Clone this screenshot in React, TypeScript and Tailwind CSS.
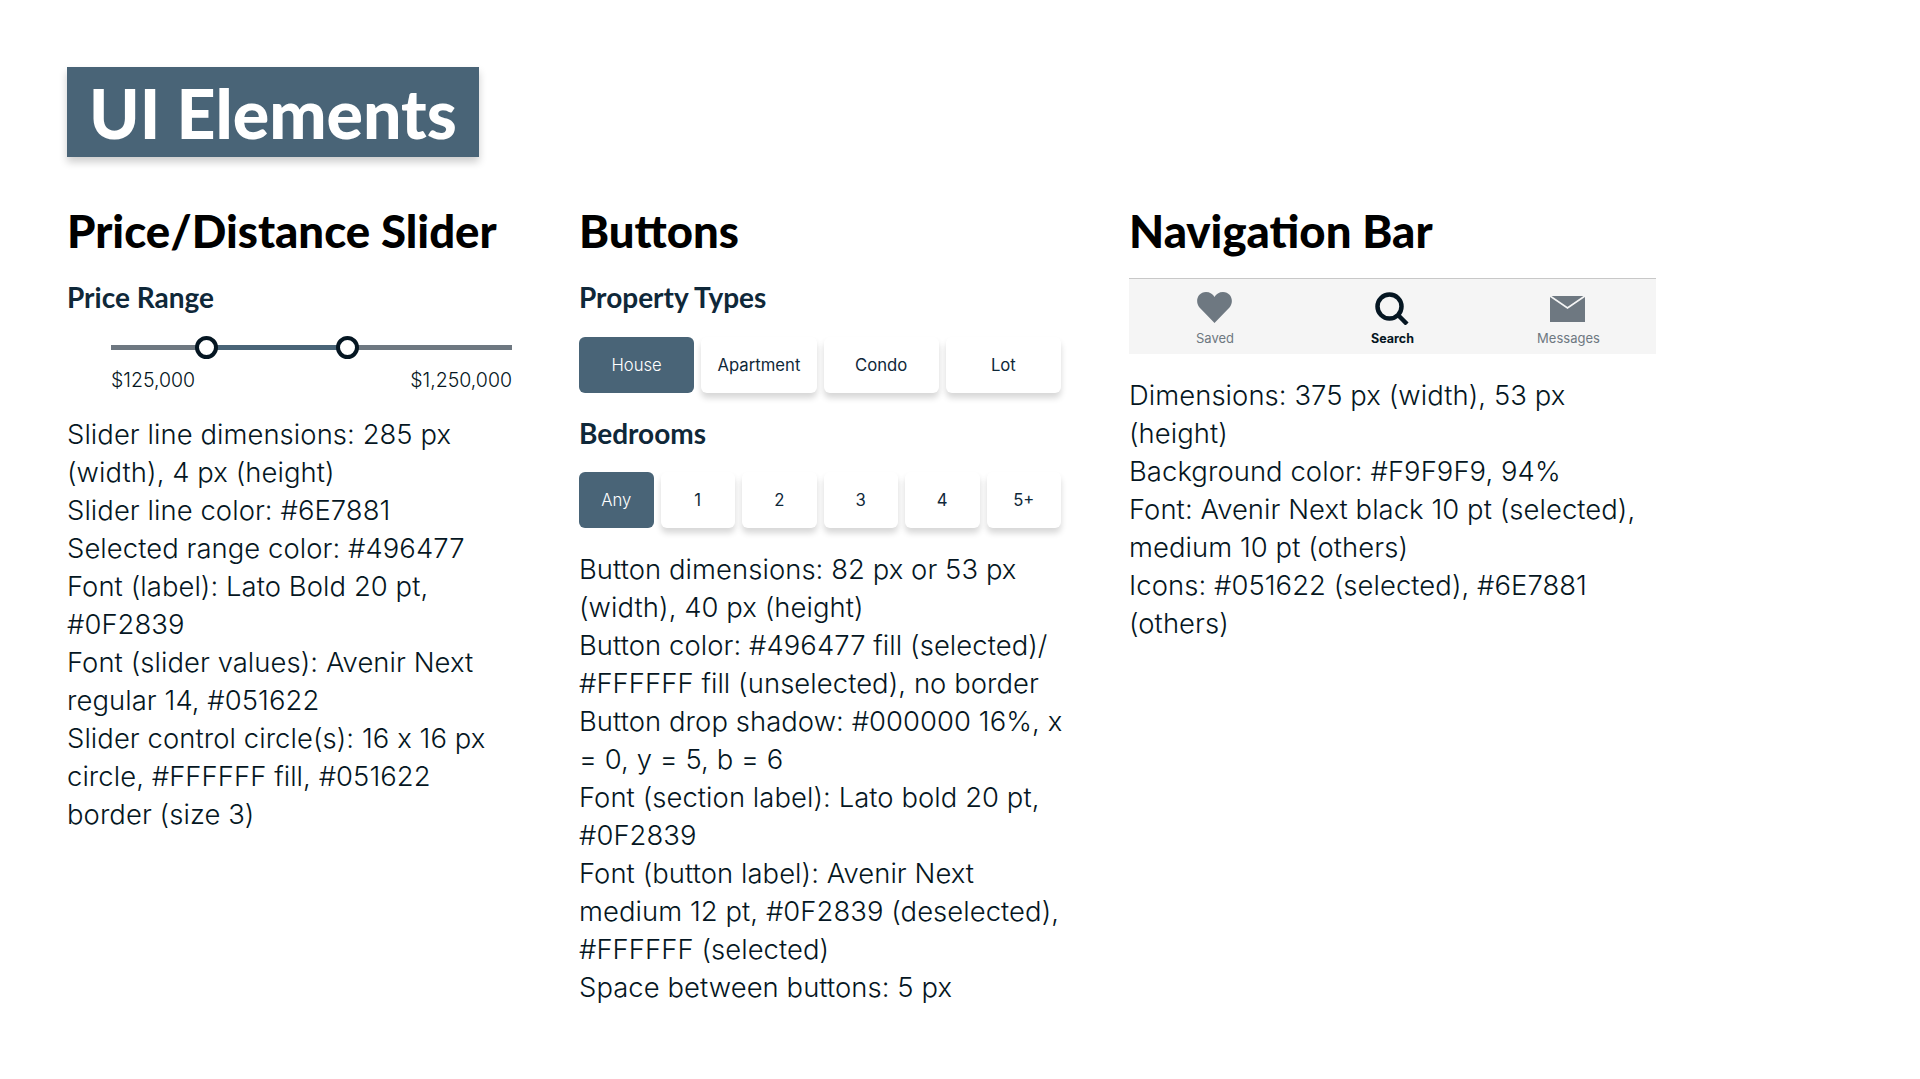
const body = "font-['Inter',sans-serif] font-light text-[27.4px] tracking-[0.08px] leading-[38px] text-[#051622] [font-feature-settings:'calt'_0]";
const lato = "font-['Lato',sans-serif]";
const avenir = "font-['Inter',sans-serif]";

function Heading({ children }: { children: string }) {
  return <h2 className={`${lato} text-[45.5px] leading-[55px] pb-[1px] font-black text-black whitespace-nowrap`}>{children}</h2>;
}
function Sub({ children }: { children: string }) {
  return <h3 className={`${lato} text-[28px] leading-[36px] font-bold text-[#0f2839]`}>{children}</h3>;
}
function Btn({ label, selected, wide }: { label: string; selected?: boolean; wide?: boolean }) {
  return (
    <div
      className={`${wide ? "w-[115.25px]" : "w-[74.5px]"} h-[56px] pt-[1px] rounded-[6px] flex items-center justify-center text-[16.7px] ${avenir} ${
        selected ? "bg-[#496477] text-white font-light" : "bg-white text-[#0f2839] shadow-[0_5px_6px_rgba(0,0,0,0.16)]"
      }`}
    >
      {label}
    </div>
  );
}

export default function App() {
  return (
    <div className="w-[1920px] h-[1079px] bg-white overflow-hidden pl-[67px] pt-[67px]">
      <div className={`${lato} w-[412px] h-[90px] bg-[#496477] text-white font-black text-[68px] leading-[92px] pl-[22px] whitespace-nowrap shadow-[0_5px_8px_rgba(0,0,0,0.2)]`}>
        UI Elements
      </div>
      <div className="flex mt-[46px]">
        <section className="w-[512px]">
          <Heading>Price/Distance Slider</Heading>
          <div className="mt-[20px]"><Sub>Price Range</Sub></div>
          <div className="ml-[44px] w-[401px] mt-[30px]">
            <div className="relative h-[5px] bg-[#6e7881]">
              <div className="absolute left-[96px] w-[140px] h-[5px] bg-[#496477]" />
              <div className="absolute left-[84px] top-[-9px] w-[23px] h-[23px] rounded-full bg-white border-[4px] border-[#051622]" />
              <div className="absolute left-[225px] top-[-9px] w-[23px] h-[23px] rounded-full bg-white border-[4px] border-[#051622]" />
            </div>
            <div className={`flex justify-between mt-[18px] ${avenir} font-light text-[19.5px] leading-[24px] text-[#051622]`}>
              <span>$125,000</span>
              <span>$1,250,000</span>
            </div>
          </div>
          <div className={`${body} w-[445px] mt-[23px]`}>
            <p>Slider line dimensions: 285 px (width), 4 px (height)</p>
            <p>Slider line color: #6E7881</p>
            <p>Selected range color: #496477</p>
            <p>Font (label): Lato Bold 20 pt, #0F2839</p>
            <p>Font (slider values): Avenir Next regular 14, #051622</p>
            <p>Slider control circle(s): 16 x 16 px circle, #FFFFFF fill, #051622 border (size 3)</p>
          </div>
        </section>
        <section className="w-[550px]">
          <Heading>Buttons</Heading>
          <div className="mt-[20px]"><Sub>Property Types</Sub></div>
          <div className="flex gap-[7px] mt-[22px]">
            <Btn wide selected label="House" />
            <Btn wide label="Apartment" />
            <Btn wide label="Condo" />
            <Btn wide label="Lot" />
          </div>
          <div className="mt-[22px]"><Sub>Bedrooms</Sub></div>
          <div className="flex gap-[7px] mt-[21px]">
            <Btn selected label="Any" />
            <Btn label="1" />
            <Btn label="2" />
            <Btn label="3" />
            <Btn label="4" />
            <Btn label="5+" />
          </div>
          <div className={`${body} w-[490px] mt-[22px]`}>
            <p>Button dimensions: 82 px or 53 px (width), 40 px (height)</p>
            <p>Button color: #496477 fill (selected)/ #FFFFFF fill (unselected), no border</p>
            <p>Button drop shadow: #000000 16%, x = 0, y = 5, b = 6</p>
            <p>Font (section label): Lato bold 20 pt, #0F2839</p>
            <p>Font (button label): Avenir Next medium 12 pt, #0F2839 (deselected), #FFFFFF (selected)</p>
            <p>Space between buttons: 5 px</p>
          </div>
        </section>
        <section className="w-[527px]">
          <Heading>Navigation Bar</Heading>
          <div className="mt-[19px] h-[76px] bg-[#f5f5f5] border-t border-[#c8c8c8] flex">
            <div className="w-[172px] flex flex-col items-center pt-[13px]">
              <svg width="35" height="31" viewBox="0 0 35 31" className="-ml-[1px]"><path fill="#6e7881" d="M17.5 31 2.5 15.5C-2.5 9.5.8 0 9 0c3.8 0 7 2 8.5 5C19 2 22.2 0 26 0c8.2 0 11.5 9.5 6.5 15.5z" /></svg>
              <span className={`${avenir} text-[13px] leading-[18px] text-[#6e7881] mt-[6px]`}>Saved</span>
            </div>
            <div className="w-[183px] flex flex-col items-center pt-[13px]">
              <svg width="34" height="33" viewBox="0 0 34 33" className="-ml-[2px]"><circle cx="14.5" cy="14.5" r="12" fill="none" stroke="#051622" strokeWidth="4.5" /><path d="M23.5 23.5 32 32" stroke="#051622" strokeWidth="4.5" /></svg>
              <span className={`${avenir} text-[12.5px] leading-[18px] text-[#051622] font-bold mt-[5px]`}>Search</span>
            </div>
            <div className="w-[171px] flex flex-col items-center pt-[17px]">
              <svg width="35" height="26" viewBox="0 0 35 26" className="-ml-[4px]"><path fill="#6e7881" d="M0 0h35v26H0z" /><path fill="none" stroke="#f5f5f5" strokeWidth="1.8" d="M0 0l17.5 12L35 0" /></svg>
              <span className={`${avenir} text-[13px] leading-[18px] text-[#6e7881] mt-[7px] -ml-[2px]`}>Messages</span>
            </div>
          </div>
          <div className={`${body} w-[527px] mt-[22px]`}>
            <p>Dimensions: 375 px (width), 53 px (height)</p>
            <p>Background color: #F9F9F9, 94%</p>
            <p>Font: Avenir Next black 10 pt (selected), medium 10 pt (others)</p>
            <p>Icons: #051622 (selected), #6E7881 (others)</p>
          </div>
        </section>
      </div>
    </div>
  );
}
